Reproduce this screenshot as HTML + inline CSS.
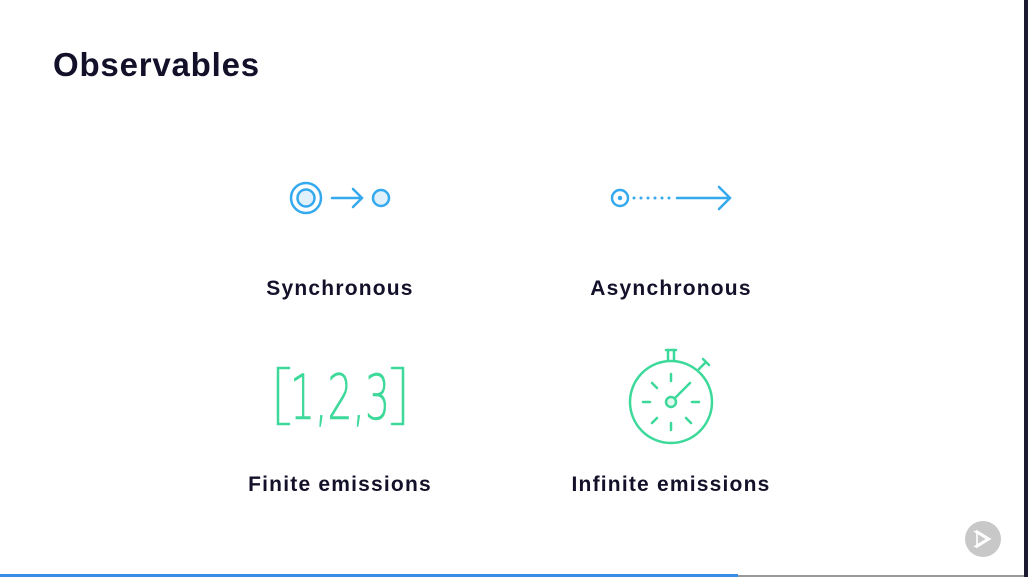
<!DOCTYPE html><html><head><style>
body{margin:0;width:1028px;height:577px;overflow:hidden;background:#fff;position:relative;font-family:"Liberation Sans",sans-serif;color:#13112a}
.t{position:absolute;font-weight:bold;white-space:nowrap}
.l{position:absolute;font-weight:bold;font-size:21px;letter-spacing:1.2px;transform:translateX(-50%);white-space:nowrap}
</style></head><body>
<div class="t" style="left:53px;top:46px;font-size:33px;letter-spacing:0.8px">Observables</div>
<div class="l" style="left:340px;top:277px">Synchronous</div>
<div class="l" style="left:671px;top:277px">Asynchronous</div>
<div class="l" style="left:340px;top:473px">Finite emissions</div>
<div class="l" style="left:671px;top:473px">Infinite emissions</div>
<svg width="1028" height="577" style="position:absolute;left:0;top:0" fill="none">
<g stroke="#35a9ee" stroke-width="2.5" stroke-linecap="round">
<circle cx="306" cy="198" r="15"/><circle cx="306" cy="198" r="8.5" fill="#e0f1fc"/>
<path d="M332 198H362M353 189L362 198L353 207"/>
<circle cx="381" cy="198" r="8" fill="#e0f1fc"/>
<circle cx="620" cy="198" r="8"/><circle cx="620" cy="198" r="1" fill="#35a9ee"/>
<path d="M634 198h0M641 198h0M648 198h0M655 198h0M662 198h0M669 198h0" stroke-width="3"/>
<path d="M677 198H730M719 187L730 198L719 209"/>
</g>
<g stroke="#3dd99a" stroke-width="2.5" stroke-linecap="round">
<path d="M289 368H278V424H289M392 368H403V424H392"/>
<circle cx="671" cy="402" r="41"/>
<circle cx="671" cy="402" r="5" fill="#e3f8ee"/>
<path d="M675 398L690 383M671 374v7M671 423v7M643 402h7M692 402h7M652 383l5 5M686 418l5 5M652 423l5-5"/>
<path d="M666 350h10M668 350v11M674 350v11M699 369l7-7M703 359l6 6"/>
</g>
<text x="340" y="419" text-anchor="middle" font-family="DejaVu Sans" font-size="62" fill="#3dd99a" stroke="#3dd99a" stroke-width="0.6" style="font-weight:200" textLength="100" lengthAdjust="spacingAndGlyphs">1,2,3</text>
<circle cx="983" cy="539" r="18" fill="#c8c8c8"/>
<path d="M977 531L990 539L977 547ZM974 531L987 539L974 547" stroke="#fff" stroke-width="1.6" fill="none"/>
</svg>
<div style="position:absolute;left:1024px;top:0;width:4px;height:577px;background:#1b1a2e"></div>
<div style="position:absolute;left:0;top:574px;width:738px;height:3px;background:#3a8de6"></div>
<div style="position:absolute;left:738px;top:575px;width:286px;height:2px;background:#999"></div>
</body></html>
